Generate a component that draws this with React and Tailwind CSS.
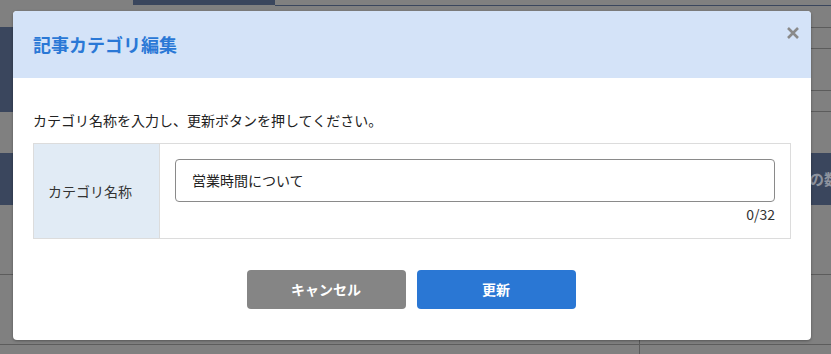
import React from 'react'

const font = { fontFamily: '"Noto Sans CJK JP", "Noto Sans", sans-serif' }

// Dimmed page behind the dialog
function Backdrop() {
  return (
    <div className="flex h-[354px] w-[831px] flex-col bg-[#808080]">
      {/* top tabs */}
      <div className="flex h-[6px]">
        <div className="w-[133px] h-[5px]" />
        <div className="w-[142px] h-[5px] bg-[#3a465d]" />
        <div className="flex-1 h-[6px] border-b border-[#3a465d]" />
      </div>
      <div className="h-[21px]" />
      {/* panel heading row */}
      <div className="flex h-[85px]">
        <div className="w-[400px] bg-[#3a465d]" />
        <div className="flex-1" />
        <div className="flex w-[20px] flex-col">
          <div className="h-[21px] border-t border-[#5c5c5c]" />
          <div className="h-[42px] border-t border-[#5c5c5c]" />
          <div className="h-[22px] border-t border-b border-[#5c5c5c]" />
        </div>
      </div>
      <div className="h-[41px]" />
      {/* table header */}
      <div className="flex h-[52px] items-center overflow-hidden whitespace-nowrap bg-[#3a465d] pl-[809px] text-[15px] font-bold text-[#8d939e]" style={font}>
        の数
      </div>
      <div className="h-[70px] border-b border-[#5c5c5c]" />
      <div className="flex h-[70px] border-b border-[#5c5c5c]">
        <div className="w-[639px]" />
        <div className="mt-[63px] flex-1 border-l border-[#5c5c5c]" />
      </div>
      <div className="flex flex-1">
        <div className="w-[639px]" />
        <div className="flex-1 border-l border-[#5c5c5c]" />
      </div>
    </div>
  )
}

function Dialog() {
  return (
    <div className="absolute left-[13px] top-[11px] w-[798px] overflow-hidden rounded-[4px] bg-white shadow-[0_1px_3px_rgba(0,0,0,0.35)]" style={font}>
      {/* header */}
      <div className="relative flex h-[67px] items-center bg-[#d4e3f8] px-[20px]">
        <h2 className="text-[18px] font-bold text-[#2a78d6]">記事カテゴリ編集</h2>
        <button className="absolute right-[9px] top-[13px] flex h-[18px] w-[18px] items-center justify-center text-[#8a8a8a]">
          <svg width="14" height="14" viewBox="0 0 14 14" fill="none">
            <path d="M2 2 L12 12 M12 2 L2 12" stroke="currentColor" strokeWidth="2.6" strokeLinecap="butt" />
          </svg>
        </button>
      </div>

      {/* body */}
      <div className="px-[20px] pt-[32px]">
        <p className="text-[14px] leading-[20px] text-[#222]">カテゴリ名称を入力し、更新ボタンを押してください。</p>

        <div className="mt-[13px] flex h-[96px] border border-[#dcdcdc]">
          <div className="flex w-[125px] items-center bg-[#e1ebf5] pl-[14px] text-[14px] text-[#333]">
            カテゴリ名称
          </div>
          <div className="flex flex-1 flex-col border-l border-[#dcdcdc] px-[15px] pt-[15px]">
            <div className="flex h-[43px] items-center rounded-[4px] border border-[#8a8a8a] px-[16px] text-[14px] text-[#222]">
              営業時間について
            </div>
            <div className="mt-[2px] text-right text-[14px] leading-[20px] text-[#333]">
              0/32
            </div>
          </div>
        </div>

        {/* actions */}
        <div className="flex justify-center gap-[11px] pb-[31px] pt-[31px] pr-[2px]">
          <button className="h-[39px] w-[159px] rounded-[4px] bg-[#858585] text-[14px] font-bold text-white">キャンセル</button>
          <button className="h-[39px] w-[159px] rounded-[4px] bg-[#2a77d4] text-[14px] font-bold text-white">更新</button>
        </div>
      </div>
    </div>
  )
}

export default function App() {
  return (
    <div className="relative h-[354px] w-[831px] overflow-hidden">
      <Backdrop />
      <Dialog />
    </div>
  )
}
